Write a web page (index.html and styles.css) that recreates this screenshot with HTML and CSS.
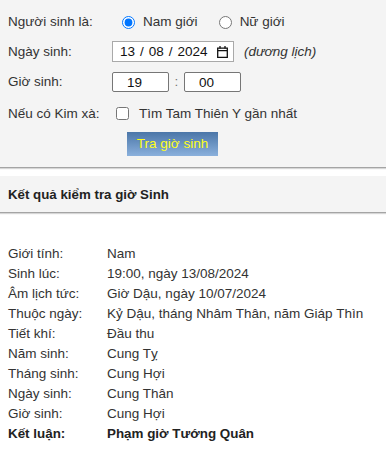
FILE: index.html
```html
<!DOCTYPE html>
<html lang="vi">
<head>
<meta charset="utf-8">
<title>Tra giờ sinh</title>
<link rel="stylesheet" href="styles.css">
</head>
<body>
<div class="form">
  <div class="row r1">
    <span class="label">Người sinh là:</span>
    <input type="radio" name="gt" class="radio first" checked>
    <span class="opt">Nam giới</span>
    <input type="radio" name="gt" class="radio second">
    <span class="opt">Nữ giới</span>
  </div>
  <div class="row r2">
    <span class="label">Ngày sinh:</span>
    <div class="datebox">
      <span class="seg">13</span><span class="sep">/</span><span class="seg">08</span><span class="sep">/</span><span class="seg">2024</span>
      <svg class="cal" width="11" height="12" viewBox="0 0 11 12"><path d="M0.7 2.2h9.6v9.1H0.7z M0.7 4.6h9.6" fill="none" stroke="#111" stroke-width="1.3"/><path d="M3 0v2.5M8 0v2.5" stroke="#111" stroke-width="1.3"/></svg>
    </div>
    <span class="hint">(dương lịch)</span>
  </div>
  <div class="row r3">
    <span class="label">Giờ sinh:</span>
    <input type="text" class="time" value="19">
    <span class="colon">:</span>
    <input type="text" class="time" value="00">
  </div>
  <div class="row r4">
    <span class="label">Nếu có Kim xà:</span>
    <input type="checkbox" class="check">
    <span class="opt">Tìm Tam Thiên Y gần nhất</span>
  </div>
  <div class="btnrow">
    <button class="btn">Tra giờ sinh</button>
  </div>
</div>

<div class="head">Kết quả kiểm tra giờ Sinh</div>

<div class="results">
  <div class="res"><span class="k">Giới tính:</span><span class="v">Nam</span></div>
  <div class="res"><span class="k">Sinh lúc:</span><span class="v">19:00, ngày 13/08/2024</span></div>
  <div class="res"><span class="k">Âm lịch tức:</span><span class="v">Giờ Dậu, ngày 10/07/2024</span></div>
  <div class="res"><span class="k">Thuộc ngày:</span><span class="v">Kỷ Dậu, tháng Nhâm Thân, năm Giáp Thìn</span></div>
  <div class="res"><span class="k">Tiết khí:</span><span class="v">Đầu thu</span></div>
  <div class="res"><span class="k">Năm sinh:</span><span class="v">Cung Tỵ</span></div>
  <div class="res"><span class="k">Tháng sinh:</span><span class="v">Cung Hợi</span></div>
  <div class="res"><span class="k">Ngày sinh:</span><span class="v">Cung Thân</span></div>
  <div class="res"><span class="k">Giờ sinh:</span><span class="v">Cung Hợi</span></div>
  <div class="res bold"><span class="k">Kết luận:</span><span class="v">Phạm giờ Tướng Quân</span></div>
</div>
</body>
</html>
```

FILE: styles.css
```css
* { box-sizing: border-box; }
html, body { margin: 0; padding: 0; background: #fff; }
body {
  font-family: "Liberation Sans", Arial, sans-serif;
  font-size: 13.5px;
  line-height: 16px;
  color: #333;
}
.form {
  background: #f4f4f4;
  padding: 7px 8px 11px;
  border-bottom: 1px solid #a4a4a4;
  box-shadow: 0 1px 1px #d6d6d6;
}
.row { display: flex; align-items: center; }
.r1 { height: 30px; }
.r2 { height: 29px; }
.r3 { height: 32px; }
.r4 { height: 31px; }
.label { width: 104px; flex: none; }
.radio { width: 13px; height: 13px; margin: 0; flex: none; }
.radio.first { margin-left: 10px; margin-right: 8px; }
.radio.second { margin-left: 21px; margin-right: 8px; }
.datebox {
  width: 122px; height: 21px;
  border: 1px solid #a9a9a9;
  background: #fff;
  display: flex; align-items: center;
  padding-left: 7px;
  color: #111;
}
.sep { margin: 0 5px; }
.cal { margin-left: auto; margin-right: 5px; }
.hint { font-style: italic; margin-left: 10px; }
.time {
  width: 57px; height: 20px;
  border: 1px solid #767676;
  border-radius: 2px;
  padding: 0 0 0 14px;
  font: inherit;
  color: #111;
  background: #fff;
  margin: 0;
}
.colon { width: 15px; text-align: center; color: #777; }
.check { width: 13px; height: 13px; margin: 0 10px 0 4px; flex: none; }
.btnrow { padding-left: 119px; margin-top: 3px; }
.btn {
  width: 91px; height: 24px;
  border: none;
  margin: 0;
  padding: 0;
  font: inherit;
  font-size: 13.5px;
  color: #ffff1a;
  background: linear-gradient(#4b76a8, #8ab0dc);
  display: block;
}
.head {
  margin-top: 8px;
  height: 37px;
  background: #f4f4f4;
  border-bottom: 1px solid #a4a4a4;
  box-shadow: 0 1px 1px #d6d6d6;
  display: flex; align-items: center;
  padding: 1px 8px 0;
  font-weight: bold;
  font-size: 13.3px;
  color: #222;
}
.results { padding: 31px 8px 10px; line-height: 20px; }
.res { display: flex; }
.k { width: 99px; flex: none; }
.bold { font-weight: bold; color: #222; font-size: 13.4px; }
```
